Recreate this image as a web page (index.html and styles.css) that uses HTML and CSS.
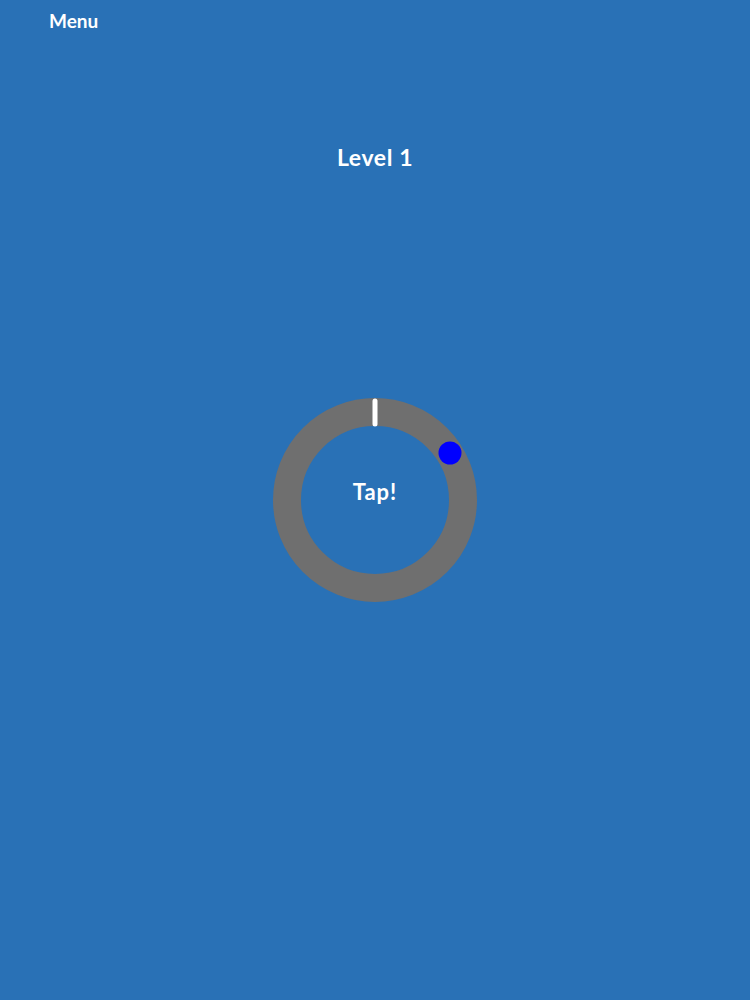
FILE: index.html
```html
<!DOCTYPE html>
<html>
<head>
<meta charset="utf-8">
<link rel="stylesheet" href="styles.css">
</head>
<body>
<div class="menu">Menu</div>
<h1 class="level">Level 1</h1>
<div class="ring">
  <svg class="ring-svg" viewBox="0 0 204 204" width="204" height="204">
    <circle cx="102" cy="102" r="88" fill="none" stroke="#6f6f6f" stroke-width="28"/>
    <line x1="102" y1="3" x2="102" y2="26" stroke="#ffffff" stroke-width="5" stroke-linecap="round"/>
    <circle cx="177" cy="55" r="11.5" fill="#0000ff"/>
  </svg>
  <div class="tap">Tap!</div>
</div>
</body>
</html>
```
FILE: styles.css
```css
html, body {
  margin: 0;
  padding: 0;
}
body {
  background: #2971b6;
  color: #ffffff;
  font-family: "Lato", "Liberation Sans", sans-serif;
  font-weight: 700;
  width: 750px;
  height: 1000px;
}
.menu {
  padding: 11px 0 0 49px;
  font-size: 19px;
  line-height: 20px;
}
.level {
  margin: 113px 0 0;
  text-align: center;
  font-size: 23px;
  line-height: 26px;
  font-weight: 700;
  letter-spacing: 0.6px;
}
.ring {
  position: relative;
  width: 204px;
  height: 204px;
  margin: 228px auto 0;
  display: flex;
  align-items: center;
  justify-content: center;
}
.ring-svg {
  position: absolute;
  left: 0;
  top: 0;
}
.tap {
  position: relative;
  font-size: 22px;
  line-height: 24px;
  letter-spacing: 1px;
  padding-bottom: 16px;
}
```
